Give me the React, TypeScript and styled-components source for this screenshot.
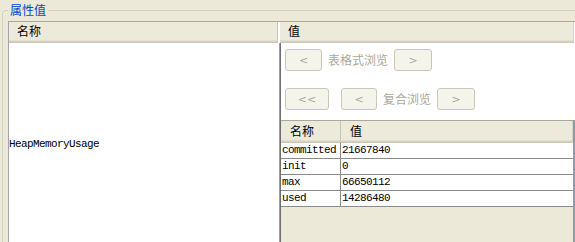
import { Fragment } from "react";
import styled, { createGlobalStyle } from "styled-components";

// data
const rows = [
  { key: "committed", value: "21667840" },
  { key: "init", value: "0" },
  { key: "max", value: "66650112" },
  { key: "used", value: "14286480" },
];

// styling
const GlobalStyle = createGlobalStyle`
  html, body {
    margin: 0;
    padding: 0;
    background: #ece9d8;
    overflow: hidden;
  }
  body {
    font-family: "Noto Sans CJK SC", "Noto Sans", sans-serif;
    font-size: 12px;
    color: #000;
  }
`;

const Page = styled.div`
  width: 575px;
  height: 242px;
  overflow: hidden;
`;

const GroupBox = styled.fieldset`
  margin: 3px -20px 0 2px;
  padding: 4px 0 20px 5px;
  border: 1px solid #d0d0bf;
  border-radius: 4px;
  min-inline-size: 0;
`;

const Legend = styled.legend`
  padding: 0 2px;
  font-size: 12px;
  line-height: 14px;
  color: #0046d5;
`;

const Table = styled.div`
  width: 566px;
  display: grid;
  grid-template-columns: 271px 295px;
  border-top: 1px solid #a7a6aa;
  border-left: 1px solid #a7a6aa;
  background: #fff;
`;

const HeaderCell = styled.div<{ $last?: boolean }>`
  height: 18px;
  line-height: 18px;
  padding-left: 8px;
  background: #ebeadb;
  box-shadow: inset 0 -1px 0 #cbc7b8, inset 0 -2px 0 #d6d2c2,
    inset 0 -3px 0 #e2decd;
  padding-bottom: 3px;
  border-right: 1px solid ${(p) => (p.$last ? "#d6d2c2" : "#c7c5b2")};
  margin-right: ${(p) => (p.$last ? "1px" : "2px")};
`;

const NameCell = styled.div`
  height: 202px;
  display: flex;
  align-items: center;
  border-right: 1px solid #9d9d9d;
  font-family: "Liberation Mono", "DejaVu Sans Mono", monospace;
  font-size: 11px;
  letter-spacing: -0.6px;
`;

const ValueCell = styled.div`
  height: 202px;
  display: flex;
  flex-direction: column;
  border-left: 1px solid #6f6f6f;
`;

const NavRow = styled.div<{ $top: number }>`
  display: flex;
  align-items: center;
  gap: 6px;
  margin-top: ${(p) => p.$top}px;
  padding-left: 4px;
  height: 22px;
`;

const NavButton = styled.button<{ $w: number; $after?: number }>`
  all: unset;
  box-sizing: border-box;
  width: ${(p) => p.$w}px;
  height: 22px;
  margin-right: ${(p) => p.$after ?? 0}px;
  display: flex;
  align-items: center;
  justify-content: center;
  border: 1px solid #c9c7ba;
  border-radius: 3px;
  background: #f5f4ea;
  color: #aca899;
  font-family: "DejaVu Sans", sans-serif;
  font-size: 11px;
  cursor: default;
`;

const NavLabel = styled.span`
  color: #aca899;
  font-size: 12px;
  line-height: 14px;
`;

const ScrollPane = styled.div`
  flex: 1;
  margin-top: 10px;
  background: #ece9d8;
  border-right: 2px solid #8c9cb0;
`;

const InnerTable = styled.div`
  display: grid;
  grid-template-columns: 60px 1fr;
  border-top: 1px solid #aca899;
`;

const InnerHeader = styled.div<{ $last?: boolean }>`
  height: 19px;
  line-height: 19px;
  padding: 0 0 3px 9px;
  background: #ebeadb;
  box-shadow: inset 0 -1px 0 #cbc7b8, inset 0 -2px 0 #d6d2c2,
    inset 0 -3px 0 #e2decd;
  border-right: 1px solid ${(p) => (p.$last ? "#d6d2c2" : "#c7c5b2")};
`;

const DataCell = styled.div<{ $first?: boolean }>`
  height: 15px;
  line-height: 15px;
  padding-left: 1px;
  background: #fff;
  border-bottom: 1px solid #8a8a8a;
  border-right: ${(p) => (p.$first ? "1px solid #8a8a8a" : "none")};
  font-family: "Liberation Mono", "DejaVu Sans Mono", monospace;
  font-size: 11px;
  letter-spacing: -0.6px;
  white-space: nowrap;
`;

function App() {
  return (
    <>
      <GlobalStyle />
      <Page>
        <GroupBox>
          <Legend>属性值</Legend>
          <Table>
            <HeaderCell>名称</HeaderCell>
            <HeaderCell $last>值</HeaderCell>
            <NameCell>HeapMemoryUsage</NameCell>
            <ValueCell>
              <NavRow $top={6}>
                <NavButton $w={37} disabled>
                  {"<"}
                </NavButton>
                <NavLabel>表格式浏览</NavLabel>
                <NavButton $w={38} disabled>
                  {">"}
                </NavButton>
              </NavRow>
              <NavRow $top={17}>
                <NavButton $w={44} $after={6} disabled>
                  {"<<"}
                </NavButton>
                <NavButton $w={36} disabled>
                  {"<"}
                </NavButton>
                <NavLabel>复合浏览</NavLabel>
                <NavButton $w={38} disabled>
                  {">"}
                </NavButton>
              </NavRow>
              <ScrollPane>
                <InnerTable>
                  <InnerHeader>名称</InnerHeader>
                  <InnerHeader $last>值</InnerHeader>
                  {rows.map((r) => (
                    <Fragment key={r.key}>
                      <DataCell $first>{r.key}</DataCell>
                      <DataCell>{r.value}</DataCell>
                    </Fragment>
                  ))}
                </InnerTable>
              </ScrollPane>
            </ValueCell>
          </Table>
        </GroupBox>
      </Page>
    </>
  );
}

export default App;
